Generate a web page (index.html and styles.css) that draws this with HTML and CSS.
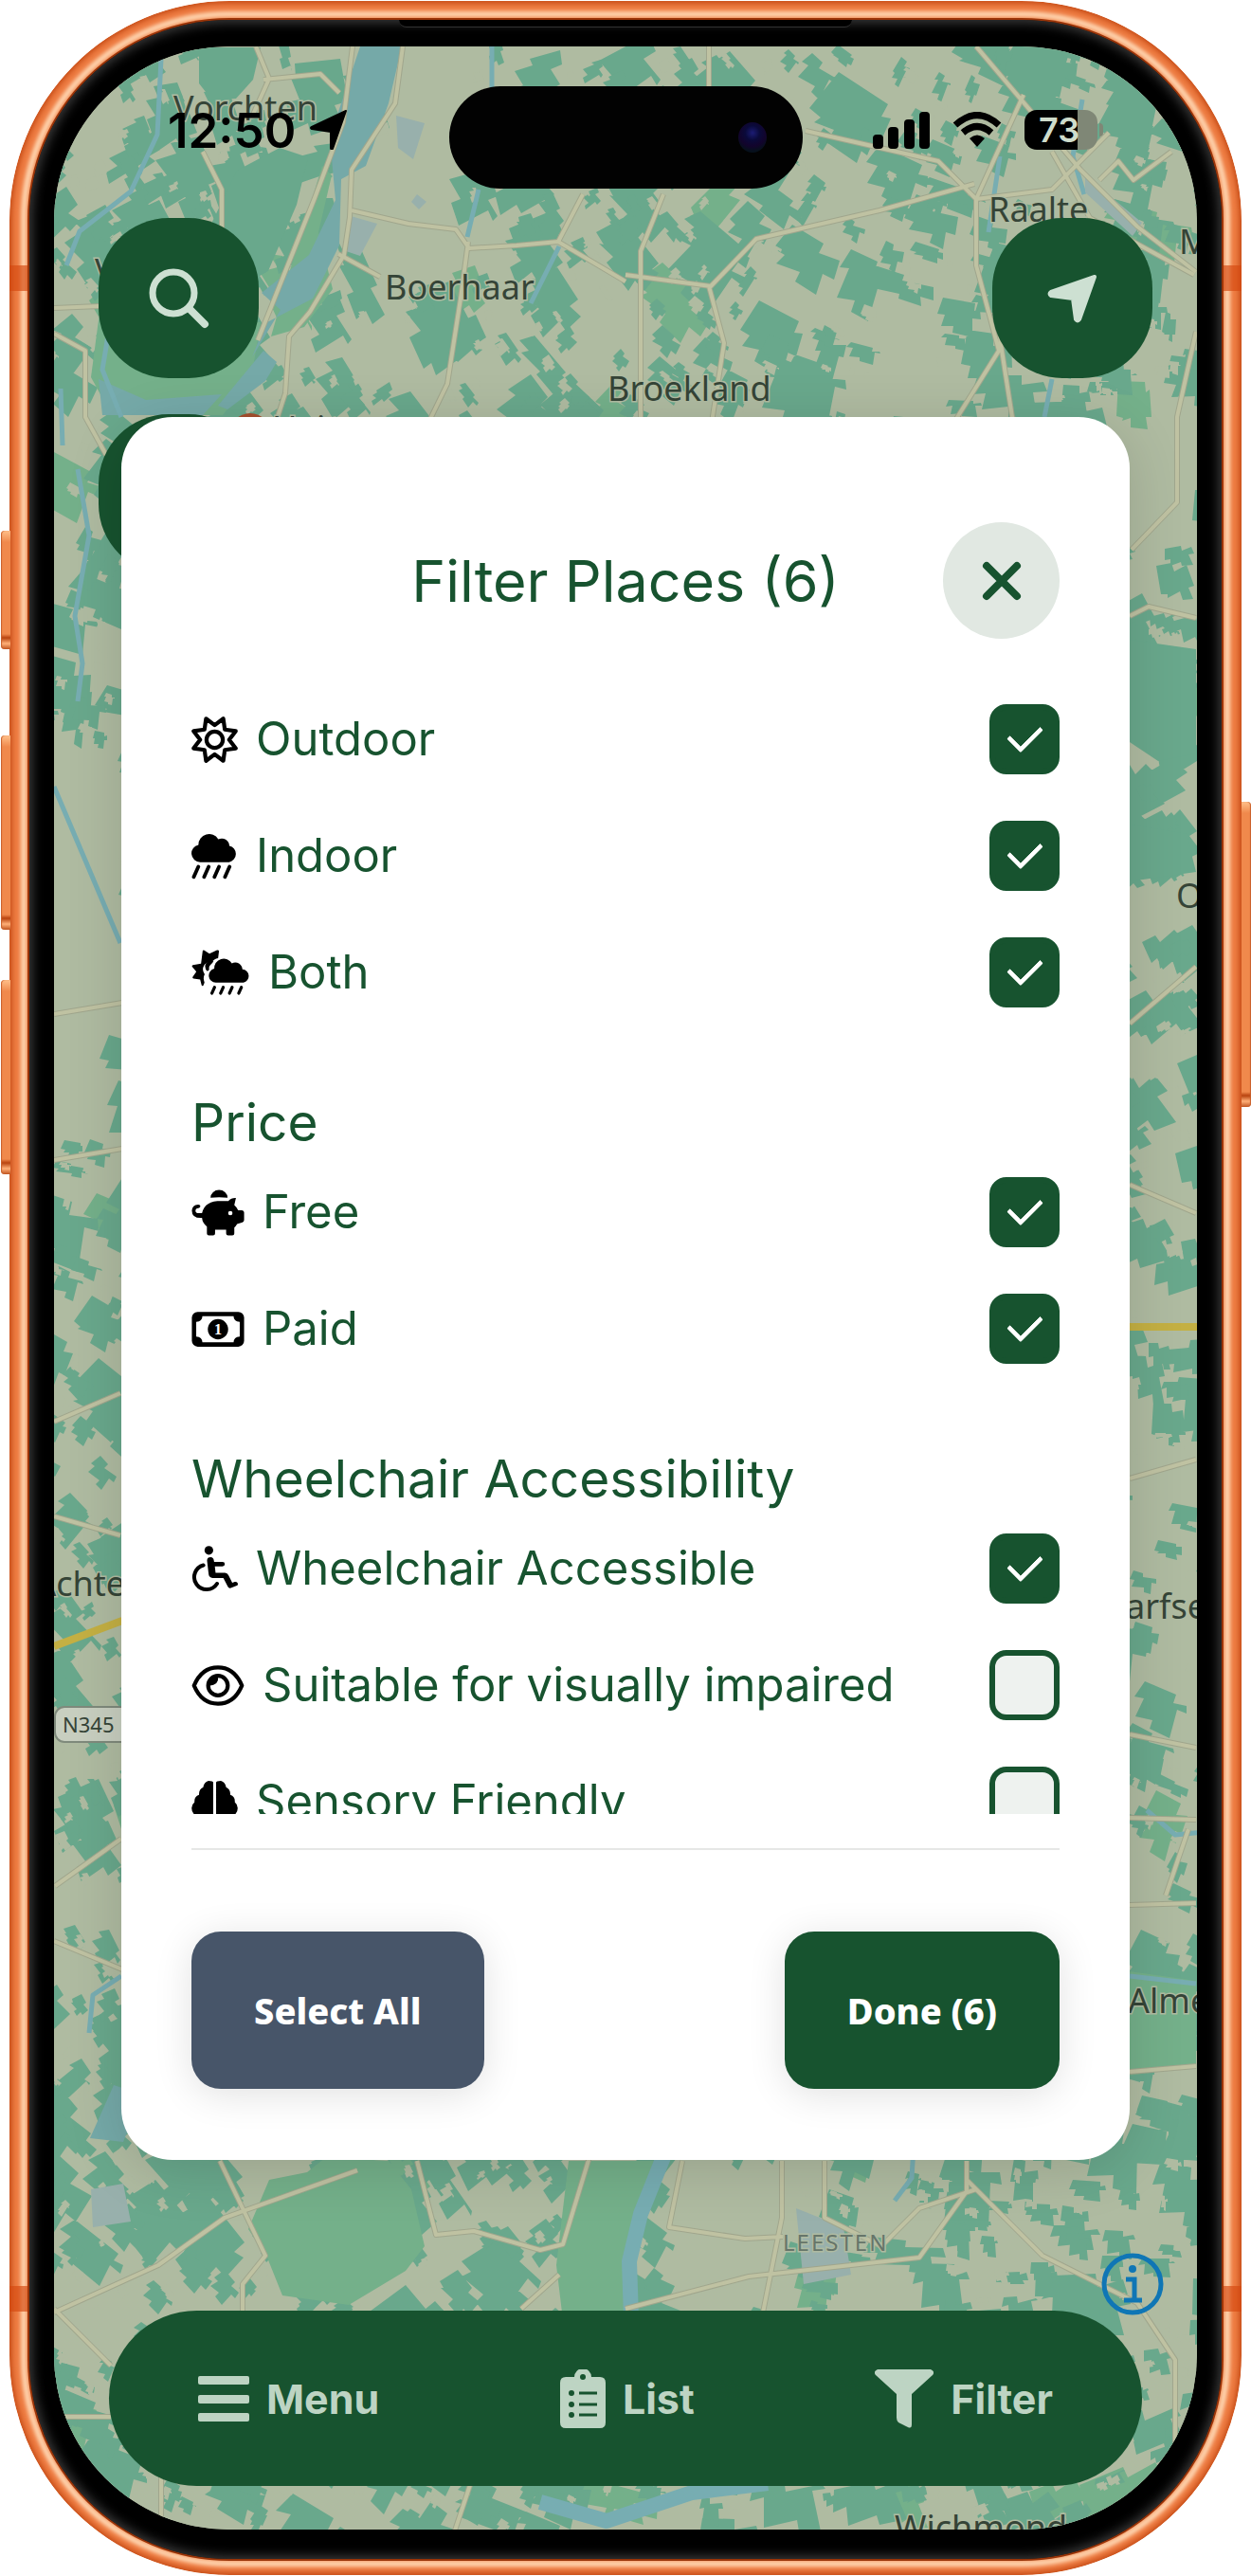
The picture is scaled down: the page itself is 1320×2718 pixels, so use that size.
FILE: index.html
```html
<!DOCTYPE html>
<html lang="en">
<head>
    <meta charset="UTF-8">
    <meta name="viewport" content="width=device-width, initial-scale=1.0">
    <title>Filter Places</title>
    <link rel="stylesheet" href="styles.css">
</head>
<body>
    <div class="phone">
        <span class="side-button action"></span>
        <span class="side-button volume-up"></span>
        <span class="side-button volume-down"></span>
        <span class="side-button power"></span>
        <span class="antenna antenna-top"></span>
        <span class="antenna antenna-bottom"></span>
        <span class="frame-shine"></span>
        <div class="bezel">
            <span class="speaker"></span>
            <div class="screen">
                <svg class="map" viewBox="57 49 1206 2620" preserveAspectRatio="xMidYMid slice" aria-hidden="true">
                    <rect class="land" x="57" y="49" width="1206" height="2620"/>
                    <g id="forests" class="forest"></g>
                    <g id="fields" class="field"></g>
                    <g id="parcels" class="field"></g>
                    <g id="clearings" class="clearing"></g>
                    <!-- bigger woods -->
                    <g class="field">
                        <path d="M210 50h65l-8 34-18 20-25 2-14-18z"/>
                        <path d="M250 180l45-24 30 10-12 50-30 70-40 20-20-70z"/>
                        <path d="M1192 675l70 10v110l-40 8-30-20z"/>
                        <path d="M1192 870l60 10 10 40-70 10z"/>
                    </g>
                    <g class="forest">
                        <path d="M340 175l10 10-14 60 15 60-30 40-35 10 20-70z"/>
                        <path d="M105 330l170 10-10 60-30 38H118l-22-40z"/>
                        <path d="M284 2300l40-8 20-16 66 4 24 30 14 60-20 26-60 36-70-10-16-40-20-30z"/>
                        <path d="M600 2280h90l-22 60 5 100h-80l-6-50z"/>
                        <path d="M1192 2080l70 10v90l-70 10z"/>
                    </g>
                    <!-- water -->
                    <g class="water">
                        <path d="M380 49h44l-14 60-24 66-26 14-2 70-28 56-50 26-14 36 30-50-20-18 50-40 28-58-6-66z"/>
                        <path d="M278 370l14 12-12 20-40 30-10-4z"/>
                        <path d="M104 400l50 22 80-6-20 22H108z"/>
                        <path d="M120 2200l30 10-20 50-35-4z"/>
                    </g>
                    <g class="stream">
                        <path d="M170 62l-4 80-28 60-54 42-14 36"/>
                        <path d="M64 410l2 60M519 49v45M505 200l-12 50M590 260l-30 60"/>
                        <path d="M82 495l12 70-15 85 8 50-5 40M57 830l70 165"/>
                        <path d="M118 330l-10 60 20 50M1142 105l-10 60 12 40"/>
                        <path d="M1210 1910l30 26 40-4M1192 2085l70 8" />
                        <path d="M128 2085l-30 20-4 40M965 2248l-3 50-18 24"/>
                        <path d="M1110 400l-8 40M1055 165l-12 80"/>
                    </g>
                    <path class="river" d="M700 2276l-24 60-12 50 2 60M570 2640l70 20 90-30 80-10"/>
                    <g class="pond">
                        <path d="M418 122l30 8-12 38-16-12zM370 228l28 8-18 34-18-6zM1145 185l60 50-10 14-50-46z"/>
                        <path d="M96 2310l34-6 8 40-40 6zM840 2330l50 20 8 50-50 10zM440 205l10 8-8 8-8-8z"/>
                    </g>
                    <!-- roads: casing first, then the light centre line -->
                    <g class="road-edge">
                        <path d="M270 49l14 34-18 40M278 84l60-6 20 20M372 49l-10 80-30 80-40 100-20 50"/>
                        <path d="M425 49l-8 60-46 70-2 50-6 40-36 60-22 26-4 60-26 80"/>
                        <path d="M371 222l60 14 50 6 14 20 50-3 44-4 71 42M357 268l44 24M494 255l-8 60-14 90-34 70"/>
                        <path d="M214 160l20 40v60M57 325l48-2M57 352l33 18v70l22 40M615 205l-26 50"/>
                        <path d="M748 49v70M850 138l140 32 40 40 80-10 60-60M1030 49l110 130 60 60 62 48"/>
                        <path d="M660 290l90 12 48-50 130-30 100-28M700 205l-24 60v200M748 302l16 60-14 90"/>
                        <path d="M1080 100l-50 110v70l24 90-50 80M1054 350l14 90 40 60M1110 160l40 70 110 60M1160 190l20-20 16 20 40-30"/>
                        <path d="M1262 350l-20 90v90l-48 50M1192 650l20-10 50 12M1192 1080l70-60M57 1070l72-12M57 1224l72-12"/>
                        <path d="M128 1940l-70 50M57 2048l72 30M57 2440l110-50 70-50 140-50M232 2280l48 100-24 30v30"/>
                        <path d="M57 2436l60 60M440 2280l20 78 40-4 70 20 24-6 28-92M590 2400l-40 36"/>
                        <path d="M660 2436l130-34 180-20 50-70V2280M825 2280v60l-20 100M720 2280l-14 70 80 12 40-2M870 2280v60l60 30 40-40 60-20"/>
                        <path d="M1020 2300l80 80 100 50 40 60v90M1192 2186l70-6M1192 1918l70 2M1192 2010l70-2M1230 2000l24-70M57 2550h60M170 2600v70M480 2670l20-60h60"/>
                        <path d="M57 1600l70 20M57 1500l70-30M1192 1250l70 30M1192 1560l70-20M1192 1830l70 14"/>
                    </g>
                    <g id="road-lines" class="road-line"></g>
                    <path class="highway" d="M57 1737l72-27M1190 1400h76"/>
                    <g class="label">
                        <text x="183" y="127">Vorchten</text>
                        <text x="100" y="299">V</text>
                        <text x="287" y="465">Heino</text>
                        <text x="406" y="316">Boerhaar</text>
                        <text x="641" y="423">Broekland</text>
                        <text x="1043" y="234">Raalte</text>
                        <text x="1244" y="268">Mariënheem</text>
                        <text x="1241" y="958">Okkenbroek</text>
                        <text x="132" y="1684" text-anchor="end">Achte</text>
                        <text x="1188" y="1708">arfse</text>
                        <text x="1190" y="2124">Almen</text>
                        <text x="944" y="2680">Wichmond</text>
                    </g>
                    <text class="label district" x="826" y="2375">LEESTEN</text>
                    <rect class="shield" x="58" y="1801" width="90" height="37" rx="10"/>
                    <text class="shield-text" x="66" y="1828">N345</text>
                    <circle class="marker" cx="264" cy="458" r="22"/>
                </svg>

                <button class="round-button ghost" aria-label="Layers"></button>

                <div class="island"><span class="camera"></span></div>

                <header class="status-bar">
                    <div class="status-left">
                        <span class="time">12:50</span>
                        <svg width="40" height="42" viewBox="0 0 40 42"><path d="M38 1L24 41q-2 1-2-1V23L2 20q-2-1 0-2z" fill="#000" stroke="#000" stroke-width="2" stroke-linejoin="round"/></svg>
                    </div>
                    <div class="status-right">
                        <svg width="60" height="40" viewBox="0 0 60 40"><rect y="25" width="11" height="15" rx="4"/><rect x="16" y="17" width="11" height="23" rx="4"/><rect x="33" y="9" width="11" height="31" rx="4"/><rect x="49" y="1" width="11" height="39" rx="4"/></svg>
                        <svg width="52" height="38" viewBox="0 0 52 38" fill="none" stroke="#000" stroke-width="7"><path d="M3 14q23-21 46 0"/><path d="M11 22q15-13 30 0"/><path d="M18 28q8-7 16 0l-8 9z" fill="#000" stroke="none"/></svg>
                        <div class="battery"><span class="battery-level">73</span></div>
                    </div>
                </header>

                <div class="map-actions">
                    <button class="round-button" aria-label="Search">
                        <svg width="64" height="64" viewBox="0 0 64 64" fill="none" stroke="#cde0d2" stroke-linecap="round"><circle cx="26" cy="26" r="22" stroke-width="7"/><path d="M43 43l16 16" stroke-width="8"/></svg>
                    </button>
                    <button class="round-button" aria-label="My location">
                        <svg width="54" height="54" viewBox="0 0 54 54"><path d="M50 4L34 49q-2 3-4 0l-3-22L4 24q-3-2 0-4z" fill="#cde0d2" stroke="#cde0d2" stroke-width="4" stroke-linejoin="round"/></svg>
                    </button>
                </div>

                <section class="dialog" role="dialog" aria-labelledby="dialog-title">
                    <div class="dialog-header">
                        <h1 id="dialog-title">Filter Places (6)</h1>
                        <button class="close" aria-label="Close">
                            <svg width="42" height="42" viewBox="0 0 42 42"><path d="M5 5l32 32M37 5L5 37" stroke="#17532f" stroke-width="8" stroke-linecap="round"/></svg>
                        </button>
                    </div>

                    <div class="filters">
                        <label class="row">
                            <svg class="icon" viewBox="0 0 512 512" fill="none" stroke="#000" stroke-width="44" stroke-linejoin="round"><path d="M351 24L368 144L488 161L416 256L488 351L368 368L351 488L256 416L161 488L144 368L24 351L96 256L24 161L144 144L161 24L256 96Z"/><circle cx="256" cy="256" r="90"/></svg>
                            <span>Outdoor</span>
                            <input type="checkbox" checked>
                        </label>
                        <label class="row">
                            <svg class="icon" viewBox="0 0 512 512"><path d="M96 320a96 96 0 0 1-19-190 118 118 0 0 1 219-62 84 84 0 0 1 122 72 92 92 0 0 1-2 180z"/><path d="M76 370L26 484M190 370l-50 114M304 370l-50 114M420 370l-50 114" stroke="#000" stroke-width="40" stroke-linecap="round"/></svg>
                            <span>Indoor</span>
                            <input type="checkbox" checked>
                        </label>
                        <label class="row">
                            <svg class="icon wide" viewBox="0 0 640 512"><path d="M120 12q6-12 18-4l56 36 84-38q18-6 22 10l-10 78q-46 8-70 46-50-14-84 32-30 50 6 100-22 40-2 90l-14 34q-12 8-18-4l-16-64-74-10q-14-4-8-18l40-56-46-56q-6-12 8-18l90-16z"/><path d="M240 128q-70-18-92 44-6 40 24 66l20-16q-8-40 14-56 20-14 34-38z"/><path d="M264 364a78 78 0 0 1-16-154 104 104 0 0 1 194-58 78 78 0 0 1 116 66 74 74 0 0 1 12 146z"/><path d="M250 416l-28 64M346 416l-28 64M444 416l-28 64M546 416l-28 64" stroke="#000" stroke-width="34" stroke-linecap="round"/></svg>
                            <span>Both</span>
                            <input type="checkbox" checked>
                        </label>

                        <h2>Price</h2>
                        <label class="row">
                            <svg class="icon medium" viewBox="0 0 576 512"><path d="M206 92a94 86 0 0 1 188 0q-94-10-188 0z"/><path d="M112 262q26-122 170-134h120q34-38 84-34l-18 78q28 24 42 58h42q24 2 24 24v84q0 20-18 24l-60 20q-10 22-30 38v66q0 22-22 22h-46q-22 0-22-22v-42H256v42q0 22-22 22h-46q-22 0-22-22v-76q-50-40-54-96-112 6-112-82 4-58 70-64 24 0 24 18t-22 20q-32 4-32 28 2 28 36 28z"/><circle cx="424" cy="262" r="24" fill="#fff"/></svg>
                            <span>Free</span>
                            <input type="checkbox" checked>
                        </label>
                        <label class="row">
                            <svg class="icon medium" viewBox="0 0 576 512"><rect y="64" width="576" height="384" rx="64"/><path d="M116 112h344q0 58 68 64v160q-68 6-68 64H116q0-58-68-64V176q68-6 68-64z" fill="#fff"/><circle cx="288" cy="256" r="112"/><text class="bill-number" x="288" y="316">1</text></svg>
                            <span>Paid</span>
                            <input type="checkbox" checked>
                        </label>

                        <h2>Wheelchair Accessibility</h2>
                        <label class="row">
                            <svg class="icon" viewBox="0 0 512 512"><circle cx="192" cy="50" r="48"/><path d="M172 162q2-36 40-36 30 2 36 38l2 14h92q26 0 26 24t-26 24h-84l8 72h104q26 2 38 26l42 84 28-10q24-8 32 14t-16 30l-60 24q-22 6-32-14l-50-98H232q-36-4-42-38z"/><path d="M132 214a136 136 0 1 0 150 204" fill="none" stroke="#000" stroke-width="42" stroke-linecap="round"/></svg>
                            <span>Wheelchair Accessible</span>
                            <input type="checkbox" checked>
                        </label>
                        <label class="row">
                            <svg class="icon medium" viewBox="0 0 576 512" fill="none" stroke="#000" stroke-width="44"><path d="M24 256C76 132 164 56 288 56s212 76 264 200c-52 124-140 200-264 200S76 380 24 256z" stroke-linejoin="round"/><circle cx="288" cy="256" r="108"/><path d="M290 160q10 90-98 98l10-60 40-34z" fill="#000" stroke="none"/></svg>
                            <span>Suitable for visually impaired</span>
                            <input type="checkbox">
                        </label>
                        <label class="row">
                            <svg class="icon" viewBox="0 0 512 512"><path d="M240 40v432q0 40-54 40-50 0-64-50-54 0-60-56-60-18-60-84 0-40 32-66-6-60 50-80-4-60 46-84 6-56 58-72 52 0 52 20zM272 40v432q0 40 54 40 50 0 64-50 54 0 60-56 60-18 60-84 0-40-32-66 6-60-50-80 4-60-46-84-6-56-58-72-52 0-52 20z"/></svg>
                            <span>Sensory Friendly</span>
                            <input type="checkbox">
                        </label>
                    </div>

                    <div class="dialog-footer">
                        <button class="btn btn-secondary">Select All</button>
                        <button class="btn btn-primary">Done (6)</button>
                    </div>
                </section>

                <a class="info" href="#info" aria-label="Map attribution">
                    <svg viewBox="0 0 66 66" fill="none" stroke="#0f76b5" stroke-width="5"><circle cx="33" cy="33" r="30"/><path d="M26 28h9v21M24 50h19"/><circle cx="33" cy="17" r="4" fill="#0f76b5" stroke="none"/></svg>
                </a>

                <nav class="tab-bar">
                    <button class="tab">
                        <svg width="54" height="48" viewBox="0 0 54 48"><rect width="54" height="9" rx="2"/><rect y="20" width="54" height="9" rx="2"/><rect y="39" width="54" height="9" rx="2"/></svg>
                        Menu
                    </button>
                    <button class="tab">
                        <svg width="48" height="62" viewBox="0 0 48 62"><path d="M6 8h9a9 9 0 0 1 18 0h9q6 0 6 6v42q0 6-6 6H6q-6 0-6-6V14q0-6 6-6z"/><circle cx="24" cy="8" r="3" fill="#17532f"/><g stroke="#17532f" stroke-width="3"><path d="M20 25h19M20 37h19M20 48h19"/></g><g fill="#17532f"><circle cx="12" cy="25" r="3"/><circle cx="12" cy="37" r="3"/><circle cx="12" cy="48" r="3"/></g></svg>
                        List
                    </button>
                    <button class="tab">
                        <svg width="62" height="62" viewBox="0 0 62 62"><path d="M3 0h56q5 2 2 6L39 26v32q0 5-4 3l-10-5q-2-2-2-5V26L1 6q-3-4 2-6z"/></svg>
                        Filter
                    </button>
                </nav>
            </div>
        </div>
    </div>

    <script src="map.js"></script>
</body>
</html>
```
FILE: map.js
```js
// Scatter the farmland parcels over the map. Seeded, so the map is the same on each load.
let seed = 23;
function random() {
    seed = (seed * 1664525 + 1013904223) % 4294967296;
    return seed / 4294967296;
}

// open land, no parcels here: x, y, width, height
const open = [
    [375, 150, 110, 150],
    [57, 790, 75, 420],
    [1200, 430, 65, 130],
    [700, 2280, 150, 150],
    [1090, 180, 100, 80],
    [420, 60, 50, 100]
];

function isOpen(x, y) {
    return open.some(o => x > o[0] && x < o[0] + o[2] && y > o[1] && y < o[1] + o[3]);
}

function parcel(x, y, size) {
    const angle = 0.35 + Math.sin(x / 240) * 0.5 + Math.cos(y / 310) * 0.5;
    const w = size * (0.5 + random());
    const h = size * (0.5 + random() * 0.9);
    // rectangle with stepped sides, like joined plots
    const a = w * (random() - 0.3);
    const b = h * (random() - 0.5);
    const shape = [
        [-w, -h], [a, -h * 0.9], [a, -h * 0.5], [w * 0.9, -h * 0.6],
        [w, b], [w * 0.6, b], [w * 0.7, h],
        [-a * 0.5, h * 0.9], [-a * 0.5, h * 0.5], [-w * 0.9, h * 0.6],
        [-w * 0.8, b], [-w * 1.2, b * 0.8]
    ];
    return 'M' + shape.map(([px, py]) =>
        Math.round(x + px * Math.cos(angle) - py * Math.sin(angle)) + ' ' +
        Math.round(y + px * Math.sin(angle) + py * Math.cos(angle))
    ).join('L') + 'Z';
}

function scatter(id, step, chance, size) {
    let d = '';
    for (let y = 50; y < 2680; y += step) {
        for (let x = 50; x < 1270; x += step) {
            const px = x + random() * step;
            const py = y + random() * step;
            if (random() < chance && !isOpen(px, py)) {
                d += parcel(px, py, size);
            }
        }
    }
    const path = document.createElementNS('http://www.w3.org/2000/svg', 'path');
    path.setAttribute('d', d);
    document.getElementById(id).appendChild(path);
}

scatter('forests', 100, 0.2, 30);
scatter('fields', 50, 0.55, 27);
scatter('parcels', 32, 0.3, 12);
scatter('clearings', 36, 0.4, 6);

// the light road line runs over the same paths as the casing
document.querySelectorAll('.road-edge path').forEach(path => {
    document.getElementById('road-lines').appendChild(path.cloneNode());
});
```
FILE: styles.css
```css
* {
    box-sizing: border-box;
}
body {
    margin: 0;
    background: #fff;
    font-family: Inter, "Liberation Sans", sans-serif;
    color: #17532f;
}
button {
    border: none;
    padding: 0;
    font-family: inherit;
    cursor: pointer;
}

/* Phone frame */
.phone {
    position: relative;
    height: 100vh;
    min-height: 1600px;
    padding: 20px 21px 17px;
    border: 1px solid #fff;
    border-width: 1px 10px;
    border-radius: 242px / 233px;
    background: #ee7c42;
    background-clip: padding-box;
    box-shadow: inset 0 0 5px 3px #c9501a;
}
.frame-shine {
    position: absolute;
    inset: 11px 12px 9px;
    border: 6px solid #ffd9b5;
    border-radius: 220px;
    filter: blur(2px);
}
.antenna {
    position: absolute;
    left: 0;
    right: 0;
    height: 27px;
    background: #d4480f;
    opacity: 0.65;
    z-index: 1;
}
.antenna-top { top: 279px; }
.antenna-bottom { bottom: 278px; }
.side-button {
    position: absolute;
    left: -9px;
    width: 10px;
    border-radius: 4px 0 0 4px;
    background: linear-gradient(#ffc08a, #f0894c 12px, #f0894c calc(100% - 16px), #b8430f calc(100% - 12px), #ffb078 calc(100% - 6px), #c05420);
    box-shadow: inset 1px 0 1px #c8602c;
}
.action { top: 559px; height: 125px; }
.volume-up { top: 775px; height: 205px; }
.volume-down { top: 1033px; height: 205px; }
.power {
    top: 845px;
    left: auto;
    right: -10px;
    height: 322px;
    border-radius: 0 4px 4px 0;
    box-shadow: inset -1px 0 1px #c8602c;
}
.bezel {
    position: relative;
    z-index: 2;
    height: 100%;
    padding: 28px 26px 31px;
    border-radius: 211px;
    background: #000;
    box-shadow: 0 0 0 2px #9a3408, inset 0 0 12px 3px #3c3c3c;
}
.speaker {
    position: absolute;
    top: 0;
    left: 31%;
    right: 31%;
    height: 8px;
    background: #000;
    border-bottom: 1px solid #333;
    border-radius: 0 0 12px 12px;
}
.screen {
    position: relative;
    height: 100%;
    display: flex;
    flex-direction: column;
    padding-bottom: 46px;
    overflow: hidden;
    border-radius: 185px;
    background: #afbca2;
}

/* Map */
.map {
    position: absolute;
    inset: 0;
    width: 100%;
    height: 100%;
}
.land { fill: #afbba1; }
.field { fill: #69a88c; }
.forest { fill: #74b08a; }
.clearing { fill: #afbba1; }
.water { fill: #75a9a8; }
.pond { fill: #98b0ac; }
.stream { fill: none; stroke: #77adb2; stroke-width: 5; stroke-linejoin: round; }
.river { fill: none; stroke: #77adb2; stroke-width: 16; stroke-linejoin: round; }
.road-edge { fill: none; stroke: #a0a68d; stroke-width: 6; stroke-linejoin: round; }
.road-line { fill: none; stroke: #bfc2a2; stroke-width: 4; stroke-linejoin: round; }
.highway { fill: none; stroke: #c4b043; stroke-width: 8; }
.label {
    font: 36px "Noto Sans", sans-serif;
    fill: #354437;
    stroke: #afbba1;
    stroke-width: 3px;
    paint-order: stroke;
}
.district {
    font-size: 24px;
    letter-spacing: 2px;
    fill: #66756a;
}
.shield { fill: #c8cfc0; stroke: #7f8a7c; stroke-width: 2; }
.shield-text { font: 22px "Noto Sans", sans-serif; fill: #354437; }
.marker { fill: #a5502f; }

/* Status bar */
.island {
    position: absolute;
    top: 42px;
    left: 50%;
    width: 373px;
    height: 108px;
    margin-left: -186px;
    border-radius: 54px;
    background: #020202;
}
.camera {
    position: absolute;
    right: 38px;
    top: 38px;
    width: 30px;
    height: 32px;
    border-radius: 50%;
    background: radial-gradient(circle at 50% 35%, #1c1c74 0, #0a0a3a 30%, #12042c 55%, #06101c 75%);
}
.status-bar {
    position: relative;
    display: flex;
    justify-content: space-between;
    align-items: center;
    height: 181px;
    padding: 0 105px 5px 120px;
}
.status-left, .status-right {
    display: flex;
    align-items: center;
    color: #000;
}
.status-left { gap: 15px; }
.status-right { gap: 24px; }
.time {
    font-size: 51px;
    font-weight: 600;
}
.battery {
    position: relative;
    width: 77px;
    height: 42px;
    border-radius: 13px;
    background: linear-gradient(to right, #000 73%, #7f8776 73%);
}
.battery::after {
    content: "";
    position: absolute;
    right: -6px;
    top: 14px;
    width: 4px;
    height: 14px;
    border-radius: 0 4px 4px 0;
    background: #7f8776;
}
.battery-level {
    display: block;
    padding-left: 15px;
    font-size: 36px;
    font-weight: 600;
    line-height: 42px;
    color: #cfdccb;
}

/* Floating map buttons */
.map-actions {
    position: relative;
    display: flex;
    justify-content: space-between;
    padding: 0 47px;
}
.round-button {
    display: flex;
    align-items: center;
    justify-content: center;
    width: 169px;
    height: 169px;
    border-radius: 74px;
    background: #17532f;
}
.ghost {
    position: absolute;
    top: 388px;
    left: 47px;
}

/* Filter dialog */
.dialog {
    position: relative;
    flex: 1;
    min-height: 0;
    display: flex;
    flex-direction: column;
    margin: 41px 71px 159px;
    padding: 111px 74px 75px;
    border-radius: 54px;
    background: #fff;
    box-shadow: 0 10px 60px rgba(0, 0, 0, 0.14);
}
.dialog-header {
    display: grid;
    grid-template-columns: 123px 1fr 123px;
    align-items: center;
}
h1 {
    grid-column: 2;
    margin: 0;
    text-align: center;
    font-size: 61px;
    font-weight: 400;
    white-space: nowrap;
}
.close {
    display: flex;
    align-items: center;
    justify-content: center;
    width: 123px;
    height: 123px;
    border-radius: 50%;
    background: #e1e8e2;
}
.filters {
    flex: 1;
    min-height: 0;
    margin-top: 45px;
    overflow: hidden;
}
h2 {
    margin: 62px 0 0;
    font-size: 55px;
    font-weight: 400;
    line-height: 68px;
}
.row {
    display: flex;
    align-items: center;
    gap: 19px;
    padding: 24px 0 25px;
    font-size: 49px;
    line-height: 74px;
}
.icon {
    flex: none;
    width: 49px;
    height: 49px;
}
.icon.medium { width: 56px; }
.icon.wide { width: 62px; }
.bill-number {
    font: bold 170px "Liberation Serif", serif;
    text-anchor: middle;
    fill: #fff;
}
input[type="checkbox"] {
    appearance: none;
    flex: none;
    width: 74px;
    height: 74px;
    margin: 0 0 0 auto;
    border: 6px solid #17532f;
    border-radius: 18px;
    background: #eef2ef;
    cursor: pointer;
}
input[type="checkbox"]:checked {
    background: #17532f;
}
input[type="checkbox"]:checked::before {
    content: "";
    display: block;
    width: 16px;
    height: 29px;
    margin: 9px auto 0;
    border: solid #fff;
    border-width: 0 5px 5px 0;
    border-radius: 2px;
    transform: rotate(45deg);
}
.dialog-footer {
    display: flex;
    justify-content: space-between;
    margin-top: 36px;
    padding-top: 86px;
    border-top: 2px solid #e6e7e6;
}
.btn {
    padding: 0 66px;
    border-radius: 31px;
    font-family: "Noto Sans", "Open Sans", sans-serif;
    font-size: 38px;
    font-weight: 800;
    line-height: 166px;
    color: #fff;
    box-shadow: 0 6px 40px rgba(0, 0, 0, 0.12);
}
.btn-secondary { background: #475569; }
.btn-primary { background: #17532f; }

/* Bottom */
.info {
    position: absolute;
    right: 35px;
    bottom: 225px;
    width: 66px;
    height: 67px;
}
.tab-bar {
    position: relative;
    display: flex;
    justify-content: space-between;
    align-items: center;
    height: 185px;
    margin: 0 58px;
    padding: 0 94px;
    border-radius: 93px;
    background: #17532f;
}
.tab {
    display: flex;
    align-items: center;
    gap: 18px;
    background: none;
    color: #bdd4c3;
    font-size: 43px;
    font-weight: 700;
}
.tab svg { fill: #bdd4c3; }
```
